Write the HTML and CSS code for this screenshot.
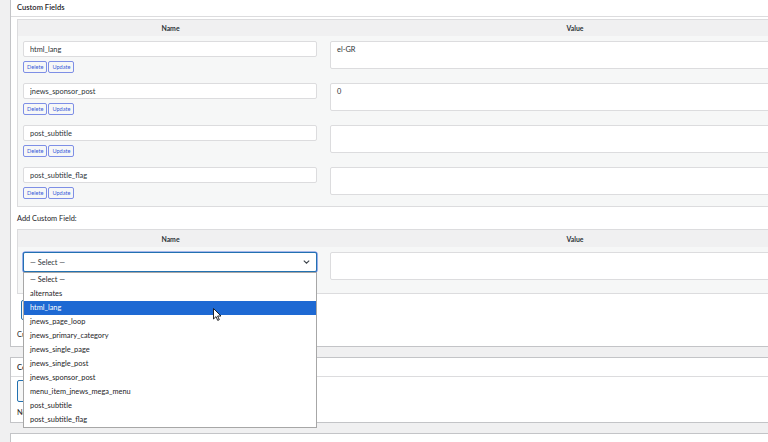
FILE: index.html
```html
<!DOCTYPE html>
<html>

<head>
    <title>Edit Post - Custom Fields</title>
    <link rel="stylesheet" href="styles.css">
</head>

<body>
    <div class="wrap">
        <div class="postbox first">
            <h2 class="hndle">Custom Fields</h2>
            <div class="inside">
                <table class="meta-table">
                    <thead>
                        <tr>
                            <th class="left">Name</th>
                            <th>Value</th>
                        </tr>
                    </thead>
                    <tbody>
                        <tr>
                            <td class="left">
                                <input class="field" type="text" value="html_lang">
                                <div class="actions"><button class="small">Delete</button><button class="small">Update</button></div>
                            </td>
                            <td class="right"><textarea class="value">el-GR</textarea></td>
                        </tr>
                        <tr>
                            <td class="left">
                                <input class="field" type="text" value="jnews_sponsor_post">
                                <div class="actions"><button class="small">Delete</button><button class="small">Update</button></div>
                            </td>
                            <td class="right"><textarea class="value">0</textarea></td>
                        </tr>
                        <tr>
                            <td class="left">
                                <input class="field" type="text" value="post_subtitle">
                                <div class="actions"><button class="small">Delete</button><button class="small">Update</button></div>
                            </td>
                            <td class="right"><textarea class="value"></textarea></td>
                        </tr>
                        <tr class="last">
                            <td class="left">
                                <input class="field" type="text" value="post_subtitle_flag">
                                <div class="actions"><button class="small">Delete</button><button class="small">Update</button></div>
                            </td>
                            <td class="right"><textarea class="value"></textarea></td>
                        </tr>
                    </tbody>
                </table>

                <p class="add-label">Add Custom Field:</p>

                <table class="meta-table new-meta">
                    <thead>
                        <tr>
                            <th class="left">Name</th>
                            <th>Value</th>
                        </tr>
                    </thead>
                    <tbody>
                        <tr>
                            <td class="left select-cell">
                                <div class="select-wrap">
                                    <div class="select">
                                        <span>— Select —</span>
                                        <svg class="chevron" width="7" height="4" viewBox="0 0 7 4">
                                            <path d="M0.8 0.6l2.7 2.6 2.7-2.6" fill="none" stroke="#3c434a" stroke-width="1.1"/>
                                        </svg>
                                    </div>
                                    <ul class="dropdown">
                                        <li>— Select —</li>
                                        <li>alternates</li>
                                        <li class="hover">html_lang</li>
                                        <li>jnews_page_loop</li>
                                        <li>jnews_primary_category</li>
                                        <li>jnews_single_page</li>
                                        <li>jnews_single_post</li>
                                        <li>jnews_sponsor_post</li>
                                        <li>menu_item_jnews_mega_menu</li>
                                        <li>post_subtitle</li>
                                        <li>post_subtitle_flag</li>
                                    </ul>
                                    <svg class="cursor" width="9" height="13" viewBox="0 0 9 13">
                                        <path d="M0.5 0.5v10.5l2.5-2.4 1.7 3.8 1.6-0.7-1.7-3.7h3.4z" fill="#fff" stroke="#111" stroke-width="0.9" stroke-linejoin="round"/>
                                    </svg>
                                </div>
                            </td>
                            <td class="right select-cell"><textarea class="value"></textarea></td>
                        </tr>
                    </tbody>
                </table>

                <div class="submit"><button class="secondary">Add Custom Field</button></div>

                <p class="note">Custom fields can be used to add extra metadata to a post.</p>
            </div>
        </div>

        <div class="postbox">
            <h2 class="hndle">Comments</h2>
            <div class="inside comments">
                <button class="secondary comment-btn">Add Comment</button>
                <p class="note">No comments yet.</p>
            </div>
        </div>

        <div class="postbox">
            <h2 class="hndle"></h2>
        </div>
    </div>
</body>

</html>
```

FILE: styles.css
```css
html,
body {
    margin: 0;
    overflow: hidden;
}

body {
    background-color: #f0f0f1;
    font-family: Lato, "Noto Sans", sans-serif;
    font-size: 7.4px;
    color: #1d2327;
}

.wrap {
    width: 825px;
    margin-left: 10px;
}

.postbox {
    background-color: #fff;
    border: 1px solid #c3c4c7;
    margin-bottom: 10px;
}

.postbox.first {
    margin-top: -3px;
}

.hndle {
    margin: 0;
    height: 18px;
    line-height: 18px;
    padding: 0 6px;
    font-size: 7.6px;
    font-weight: 600;
    border-bottom: 1px solid #dcdcde;
}

.inside {
    padding: 2px 6px 5px;
}

.meta-table {
    width: 100%;
    border: 1px solid #dcdcde;
    border-spacing: 0;
    background-color: #f6f7f7;
}

.meta-table th {
    height: 16px;
    padding: 0;
    background-color: #f0f0f1;
    font-size: 6.9px;
    font-weight: 700;
    color: #2c3338;
    text-align: center;
}

.new-meta th {
    height: 17px;
}

.meta-table th.left,
.meta-table td.left {
    width: 294px;
}

.meta-table td {
    vertical-align: top;
    padding: 5px;
}

.meta-table td.left {
    padding-right: 6px;
}

.meta-table td.right {
    padding-left: 7px;
}

.meta-table tr.last td {
    padding-bottom: 7px;
}

.field {
    display: block;
    box-sizing: border-box;
    width: 100%;
    height: 16px;
    margin: 0;
    padding: 0 6px;
    border: 1px solid #dcdcde;
    border-radius: 2px;
    background-color: #fff;
    font: inherit;
    color: #2c3338;
}

.value {
    display: block;
    box-sizing: border-box;
    width: 100%;
    height: 28px;
    margin: 0;
    padding: 3px 6px;
    border: 1px solid #dcdcde;
    border-radius: 2px;
    background-color: #fff;
    font: inherit;
    color: #2c3338;
    resize: none;
    overflow: hidden;
}

.actions {
    display: flex;
    gap: 1px;
    margin-top: 4px;
}

button.small {
    height: 12px;
    padding: 0 3px;
    border: 1px solid #7e8fe6;
    border-radius: 2px;
    background-color: #f6f7f7;
    color: #3a5bd9;
    font-family: inherit;
    font-size: 5.6px;
    line-height: 10px;
}

.add-label {
    margin: 6px 0 4px;
    line-height: 12px;
}

.meta-table td.select-cell {
    padding-bottom: 13px;
}

.select-wrap {
    position: relative;
}

.select {
    display: flex;
    align-items: center;
    justify-content: space-between;
    box-sizing: border-box;
    height: 20px;
    padding: 0 6px;
    border: 1px solid #2271b1;
    box-shadow: 0 0 0 0.6px #5b7be0;
    border-radius: 2px;
    background-color: #fff;
    color: #2c3338;
}

.dropdown {
    position: absolute;
    top: 100%;
    left: 0;
    right: 0;
    margin: 0;
    padding: 0;
    list-style: none;
    background-color: #fff;
    border: 1px solid #a7a7a7;
    z-index: 5;
}

.dropdown li {
    height: 14px;
    line-height: 14px;
    padding: 0 6px;
    color: #1d2327;
}

.dropdown li.hover {
    background-color: #1e69d3;
    color: #fff;
}

.cursor {
    position: absolute;
    left: 190px;
    top: 56px;
    z-index: 6;
}

.submit {
    margin: 6px 0 0 4px;
}

button.secondary {
    display: block;
    height: 20px;
    padding: 0 8px;
    border: 1px solid #2271b1;
    border-radius: 2px;
    background-color: #f6f7f7;
    color: #2271b1;
    font-family: inherit;
    font-size: 7.4px;
}

.note {
    margin: 9px 0 0;
    line-height: 12px;
}

.inside.comments {
    padding: 3px 6px 3px;
}

.comment-btn {
    height: 22px !important;
}

.comments .note {
    margin-top: 5px;
}
```
